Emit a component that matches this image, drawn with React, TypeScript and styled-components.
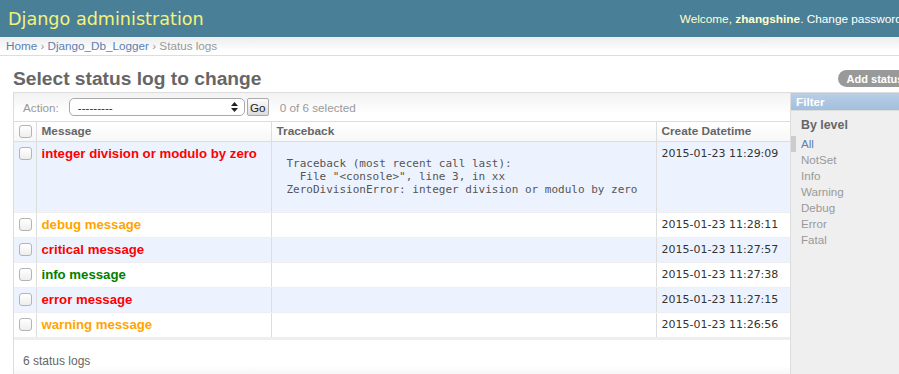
import React from 'react';
import styled, { createGlobalStyle } from 'styled-components';

const GlobalStyle = createGlobalStyle`
html, body {
    margin: 0;
    padding: 0;
    overflow: hidden;
    background: #fff;
}
body {
    font-family: "Liberation Sans", Arial, sans-serif;
    font-size: 11.7px;
    color: #333;
}
`

const Page = styled.div`
width: 976px;
`

const Header = styled.div`
display: flex;
align-items: center;
justify-content: space-between;
height: 37px;
padding: 0 25px 0 8px;
background: #4a7f98;
`

const Branding = styled.h1`
margin: 0;
font-family: "DejaVu Sans", sans-serif;
font-weight: normal;
font-size: 17.6px;
color: #f4f379;
`

const UserTools = styled.div`
font-size: 11.8px;
color: #ffc;
& strong {
    font-weight: bold;
}
`

const HeaderLink = styled.a`
color: #fff;
text-decoration: none;
`

const Breadcrumbs = styled.div`
height: 18px;
line-height: 18px;
padding: 0 6px;
font-size: 11.7px;
color: #999;
background: linear-gradient(#ededed, #fff 80%);
border-bottom: 1px solid #ddd;
`

const Crumb = styled.a`
color: #5b80b2;
text-decoration: none;
`

const Content = styled.div`
padding: 10px 24px 0 13px;
`

const TitleRow = styled.div`
display: flex;
justify-content: space-between;
align-items: flex-start;
height: 26px;
`

const Title = styled.h1`
margin: 0;
font-size: 19.2px;
line-height: 26px;
font-weight: bold;
color: #666;
`

const AddLink = styled.a`
display: flex;
align-items: center;
gap: 4px;
margin-top: 4px;
height: 17px;
padding: 0 13px 0 9px;
border-radius: 9px;
background: #999;
color: #fff;
font-size: 11px;
font-weight: bold;
text-decoration: none;
`

const Changelist = styled.div`
display: grid;
grid-template-columns: 776px 161px;
border-top: 1px solid #ddd;
border-left: 1px solid #ddd;
`

const Main = styled.div`
display: flex;
flex-direction: column;
`

const Actions = styled.div`
display: flex;
align-items: center;
height: 28px;
padding: 0 9px;
color: #999;
background: linear-gradient(#f2f2f2, #fff 70%);
border-bottom: 1px solid #ddd;
`

const ActionLabel = styled.label`
margin-right: 10px;
`

const SelectWrap = styled.span`
position: relative;
display: inline-block;
width: 176px;
height: 18px;
`

const Select = styled.select`
appearance: none;
width: 100%;
height: 100%;
margin: 0;
padding: 0 0 0 8px;
border: 1px solid #a9a9a9;
border-radius: 5px;
background: #fff;
font-family: "Liberation Sans", Arial, sans-serif;
font-size: 11.7px;
color: #333;
`

const SelectArrows = styled.svg`
position: absolute;
right: 7px;
top: 4px;
pointer-events: none;
`

const GoButton = styled.button`
width: 22px;
height: 18px;
margin: 0 11px 0 2px;
padding: 0;
border: 1px solid #aaa;
border-radius: 2px;
background: linear-gradient(#fdfdfd, #dcdcdc);
font-family: "Liberation Sans", Arial, sans-serif;
font-size: 11.7px;
color: #222;
`

const Table = styled.table`
width: 776px;
table-layout: fixed;
border-collapse: collapse;
`

const Col = styled.col<{ $w: number }>`
width: ${(p) => p.$w}px;
`

const Th = styled.th`
text-align: left;
padding: 3px 5px;
line-height: 13px;
font-size: 11.8px;
font-weight: bold;
color: #666;
background: linear-gradient(#fff, #f7f7f7);
border-bottom: 1px solid #ddd;
border-left: 1px solid #ddd;
&:first-child {
    border-left: none;
}
`

const Tr = styled.tr<{ $alt: boolean }>`
background: ${(p) => (p.$alt ? '#edf3fe' : '#fff')};
`

const Td = styled.td`
padding: 5px;
line-height: 14px;
vertical-align: top;
border-bottom: 1px solid #eee;
border-left: 1px solid #ddd;
&:first-child {
    border-left: none;
}
`

const Checkbox = styled.input.attrs({ type: 'checkbox' })`
appearance: none;
display: block;
width: 13px;
height: 13px;
margin: 0;
border: 1px solid #b4b4b4;
border-radius: 3px;
background: linear-gradient(#fff, #eee);
`

const levelColors: Record<string, string> = {
    error: '#ff0000',
    warning: '#ffa500',
    info: '#008000',
}

const Message = styled.span<{ $level: string }>`
font-size: 13.2px;
font-weight: bold;
color: ${(p) => levelColors[p.$level]};
`

const DateCell = styled(Td)`
font-family: "DejaVu Sans", sans-serif;
font-size: 11px;
color: #333;
`

const Trace = styled.pre`
margin: 10px 0 11px 10px;
font-family: "DejaVu Sans Mono", monospace;
font-size: 11px;
line-height: 13px;
color: #555;
`

const Paginator = styled.div`
padding: 10px 9px;
line-height: 22px;
font-size: 12px;
color: #666;
border-top: 2px solid #eee;
background: linear-gradient(#fff 60%, #f0f0f0);
`

const Filter = styled.div`
border-left: 1px solid #ddd;
background: #efefef;
min-height: 300px;
`

const FilterTitle = styled.h2`
margin: 0;
padding: 2px 5px;
line-height: 13px;
font-size: 11.7px;
font-weight: bold;
color: #fff;
background: linear-gradient(#b8cfe6, #a3bfdc);
border-bottom: 1px solid #ddd;
`

const FilterHeading = styled.h3`
margin: 6px 0 3px 10px;
line-height: 16px;
font-size: 12.4px;
font-weight: bold;
color: #666;
`

const FilterList = styled.ul`
margin: 0;
padding: 0 0 0 10px;
list-style: none;
`

const FilterItem = styled.li<{ $selected: boolean }>`
line-height: 16px;
font-size: 11.6px;
${(p) => p.$selected && `
    border-left: 5px solid #ccc;
    margin-left: -10px;
    padding-left: 5px;
`}
`

const FilterLink = styled.a<{ $selected: boolean }>`
color: ${(p) => (p.$selected ? '#5b80b2' : '#999')};
text-decoration: none;
`

const logs = [
    {
        message: 'integer division or modulo by zero',
        level: 'error',
        trace: 'Traceback (most recent call last):\n  File "<console>", line 3, in xx\nZeroDivisionError: integer division or modulo by zero',
        date: '2015-01-23 11:29:09',
    },
    { message: 'debug message', level: 'warning', trace: '', date: '2015-01-23 11:28:11' },
    { message: 'critical message', level: 'error', trace: '', date: '2015-01-23 11:27:57' },
    { message: 'info message', level: 'info', trace: '', date: '2015-01-23 11:27:38' },
    { message: 'error message', level: 'error', trace: '', date: '2015-01-23 11:27:15' },
    { message: 'warning message', level: 'warning', trace: '', date: '2015-01-23 11:26:56' },
]

const levels = ['All', 'NotSet', 'Info', 'Warning', 'Debug', 'Error', 'Fatal']

export default function App() {
    return (
        <Page>
            <GlobalStyle />
            <Header>
                <Branding>Django administration</Branding>
                <UserTools>
                    Welcome, <strong>zhangshine</strong>. <HeaderLink href="#">Change password</HeaderLink> / <HeaderLink href="#">Log out</HeaderLink>
                </UserTools>
            </Header>
            <Breadcrumbs>
                <Crumb href="#">Home</Crumb> › <Crumb href="#">Django_Db_Logger</Crumb> › Status logs
            </Breadcrumbs>
            <Content>
                <TitleRow>
                    <Title>Select status log to change</Title>
                    <AddLink href="#">
                        Add status log
                        <svg width="12" height="12" viewBox="0 0 12 12">
                            <circle cx="6" cy="6" r="5.5" fill="#fff" />
                            <path d="M6 3v6M3 6h6" stroke="#999" strokeWidth="1.8" />
                        </svg>
                    </AddLink>
                </TitleRow>
                <Changelist>
                    <Main>
                        <Actions>
                            <ActionLabel>Action:</ActionLabel>
                            <SelectWrap>
                                <Select defaultValue="">
                                    <option value="">---------</option>
                                    <option value="delete">Delete selected status logs</option>
                                </Select>
                                <SelectArrows width="7" height="10" viewBox="0 0 7 10">
                                    <path d="M3.5 0L7 4H0z M3.5 10L0 6h7z" fill="#222" />
                                </SelectArrows>
                            </SelectWrap>
                            <GoButton>Go</GoButton>
                            <span>0 of 6 selected</span>
                        </Actions>
                        <Table>
                            <colgroup>
                                <Col $w={22} />
                                <Col $w={235} />
                                <Col $w={385} />
                                <Col $w={134} />
                            </colgroup>
                            <thead>
                                <tr>
                                    <Th><Checkbox /></Th>
                                    <Th>Message</Th>
                                    <Th>Traceback</Th>
                                    <Th>Create Datetime</Th>
                                </tr>
                            </thead>
                            <tbody>
                                {logs.map((log, i) => (
                                    <Tr key={log.date} $alt={i % 2 === 0}>
                                        <Td><Checkbox /></Td>
                                        <Td><Message $level={log.level}>{log.message}</Message></Td>
                                        <Td>{log.trace && <Trace>{log.trace}</Trace>}</Td>
                                        <DateCell>{log.date}</DateCell>
                                    </Tr>
                                ))}
                            </tbody>
                        </Table>
                        <Paginator>6 status logs</Paginator>
                    </Main>
                    <Filter>
                        <FilterTitle>Filter</FilterTitle>
                        <FilterHeading>By level</FilterHeading>
                        <FilterList>
                            {levels.map((l, i) => (
                                <FilterItem key={l} $selected={i === 0}>
                                    <FilterLink href="#" $selected={i === 0}>{l}</FilterLink>
                                </FilterItem>
                            ))}
                        </FilterList>
                    </Filter>
                </Changelist>
            </Content>
        </Page>
    )
}
